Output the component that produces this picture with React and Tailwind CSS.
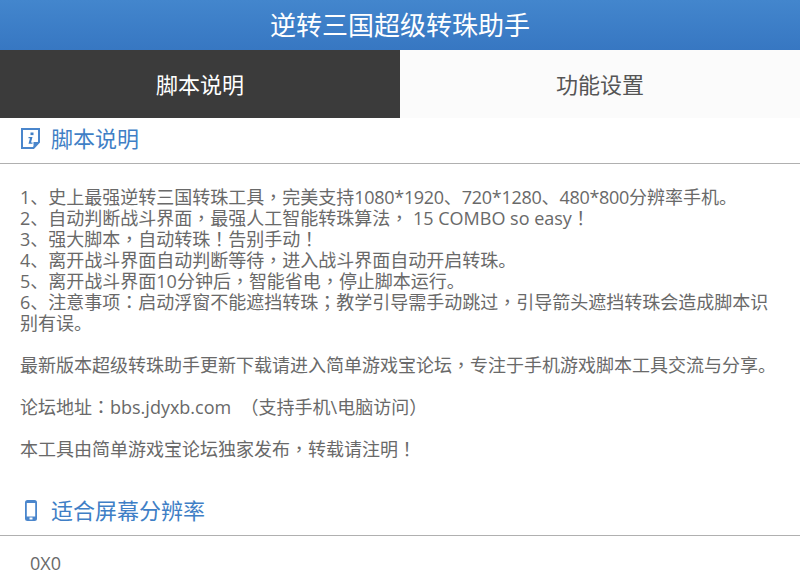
import React from "react";

const InfoIcon = () => (
  <svg width="19" height="21" viewBox="0 0 19 21" className="block">
    <path d="M1 1H18V14L12.5 20H1Z" fill="none" stroke="#4a86cc" strokeWidth="2" />
    <path d="M18 14H12.5V20Z" fill="#4a86cc" />
    <rect x="9.5" y="4.5" width="3" height="2.6" fill="#3f7fc6" />
    <path d="M7.5 9H11.5L10 14.5H11.5V15.7H7.5L9 10.2H7.5Z" fill="#3f7fc6" />
  </svg>
);

const PhoneIcon = () => (
  <svg width="12" height="21" viewBox="0 0 12 21" className="block">
    <rect x="0" y="0" width="12" height="21" rx="2.5" fill="#4a86cc" />
    <rect x="1.8" y="3" width="8.4" height="13.5" fill="#ffffff" />
    <rect x="4.5" y="17.5" width="3" height="2" fill="#ffffff" />
  </svg>
);

const lines = [
  "1、史上最强逆转三国转珠工具，完美支持1080*1920、720*1280、480*800分辨率手机。",
  "2、自动判断战斗界面，最强人工智能转珠算法， 15 COMBO so easy！",
  "3、强大脚本，自动转珠！告别手动！",
  "4、离开战斗界面自动判断等待，进入战斗界面自动开启转珠。",
  "5、离开战斗界面10分钟后，智能省电，停止脚本运行。",
  "6、注意事项：启动浮窗不能遮挡转珠；教学引导需手动跳过，引导箭头遮挡转珠会造成脚本识别有误。",
  "",
  "最新版本超级转珠助手更新下载请进入简单游戏宝论坛，专注于手机游戏脚本工具交流与分享。",
  "",
  "论坛地址：bbs.jdyxb.com  （支持手机\\电脑访问）",
  "",
  "本工具由简单游戏宝论坛独家发布，转载请注明！",
];

// Full-width punctuation sits mid-cell in the reference; digit runs have rounded advances.
const renderLine = (text) =>
  text.split(/([，！：；（）]|[0-9*]{3,})/).map((part, i) => {
    if (/^[，！：；（）]$/.test(part)) {
      return (
        <span key={i} className="leading-[0] font-['Noto_Sans_CJK_TC',sans-serif]">
          {part}
        </span>
      );
    }
    if (/^[0-9*]{3,}$/.test(part)) {
      return (
        <span key={i} className="tracking-[-0.3px]">
          {part}
        </span>
      );
    }
    return part;
  });

export default function App() {
  return (
    <div className="w-[800px] h-[575px] overflow-hidden bg-white font-['Open_Sans','Noto_Sans_CJK_SC',sans-serif]">
      <header className="h-[50px] flex items-center justify-center text-[26px] text-white bg-gradient-to-b from-[#4386cd] to-[#3777c2]">
        逆转三国超级转珠助手
      </header>
      <nav className="flex h-[68px] text-[22px]">
        <div className="w-1/2 flex items-center justify-center bg-[#3b3b3b] text-white">脚本说明</div>
        <div className="w-1/2 flex items-center justify-center bg-[#fbfbfb] text-[#555555]">功能设置</div>
      </nav>
      <section className="h-[46px] flex items-center border-b border-[#b0b0b0] pl-[21px] pb-[4px] gap-[11px] text-[22px] text-[#3f7fc6]">
        <InfoIcon />
        <span>脚本说明</span>
      </section>
      <div className="pt-[23px] pl-5 pr-[20px] text-[18px] leading-[21px] text-[#696969]">
        {lines.map((l, i) => (
          <p key={i} className="min-h-[21px] whitespace-pre-wrap">{renderLine(l)}</p>
        ))}
      </div>
      <section className="mt-[24px] h-[52px] flex items-center border-b border-[#b0b0b0] pl-[25px] pt-[2px] gap-[14px] text-[22px] text-[#3f7fc6]">
        <PhoneIcon />
        <span>适合屏幕分辨率</span>
      </section>
      <div className="pl-[30px] pt-[17px] text-[18px] leading-[21px] text-[#696969]">0X0</div>
    </div>
  );
}
